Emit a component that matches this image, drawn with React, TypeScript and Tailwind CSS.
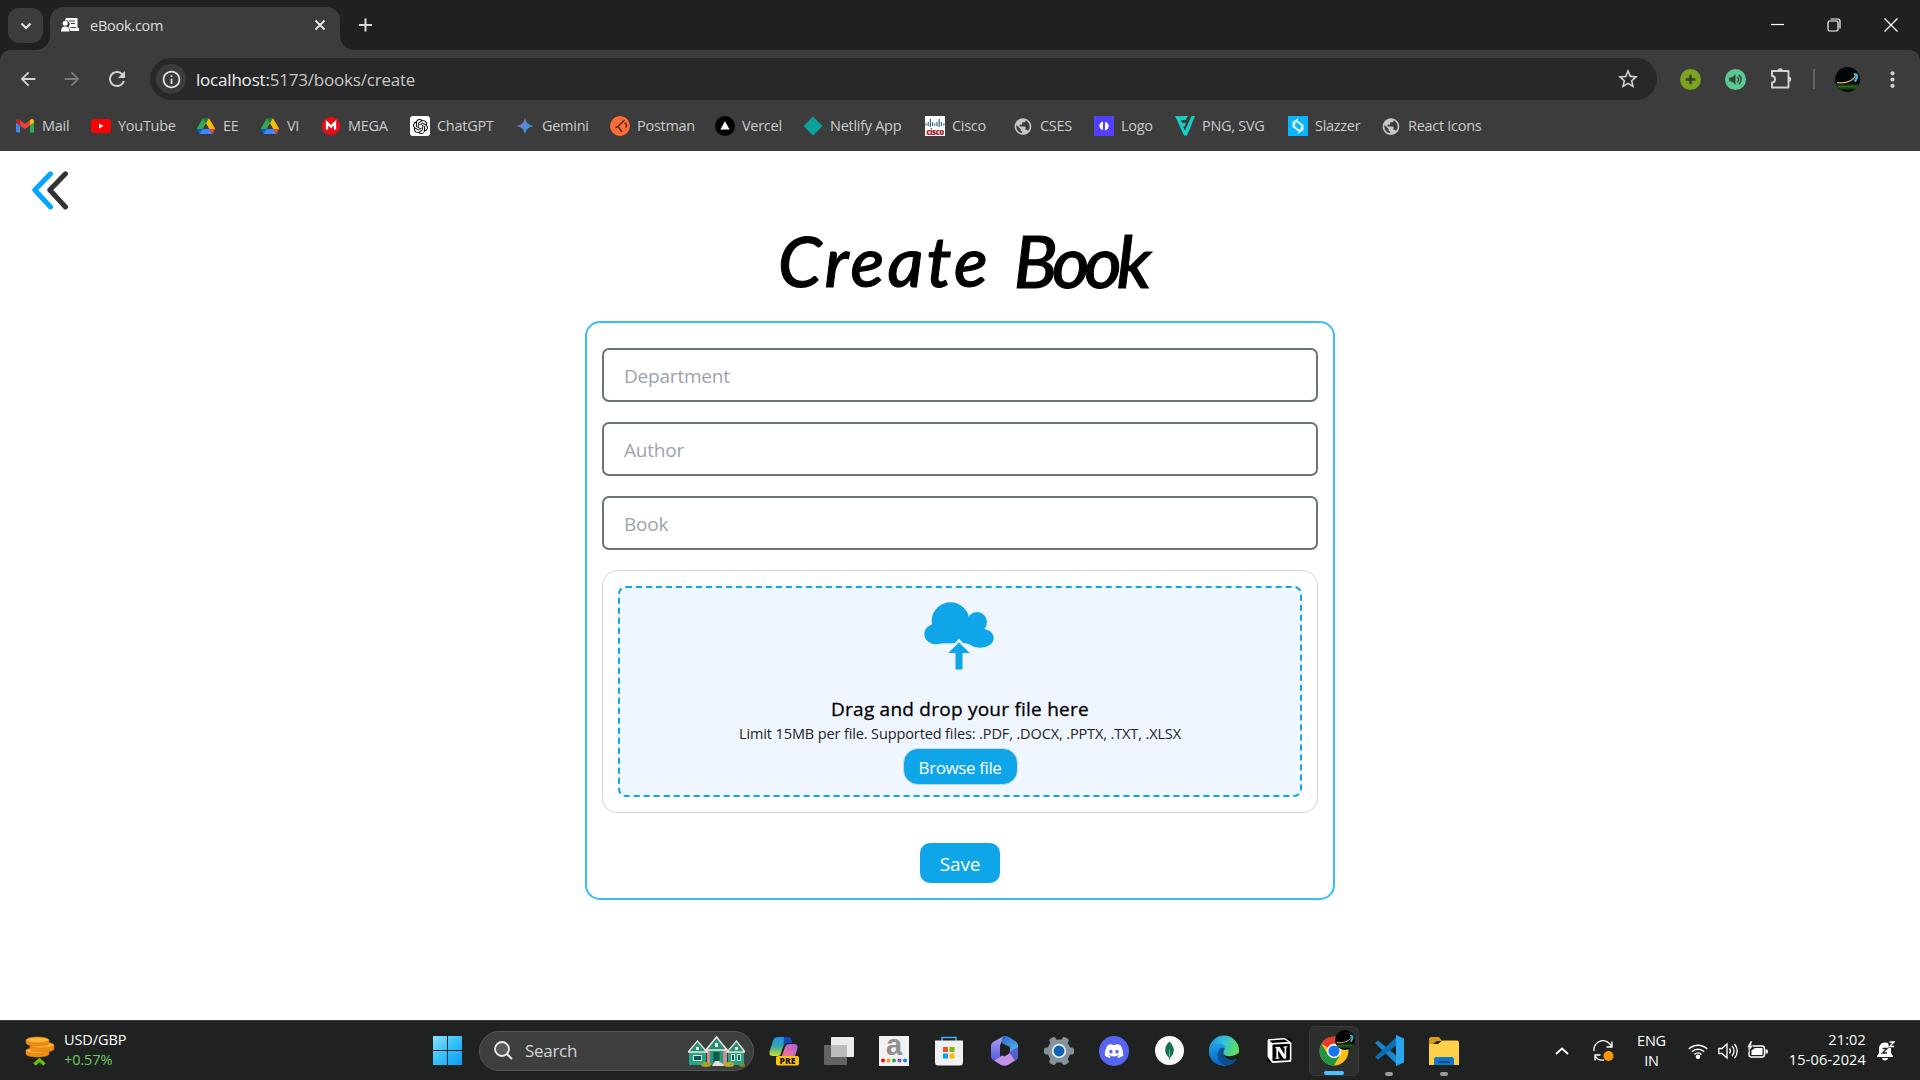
import type { ReactNode } from "react";
import { SiOpenai, SiMongodb, SiNotion } from "react-icons/si";
import { FaDiscord } from "react-icons/fa";
import { MdArrowBack, MdArrowForward, MdRefresh, MdInfoOutline, MdStarOutline, MdPublic, MdMoreVert } from "react-icons/md";

const Gmail = () => (
  <svg viewBox="52 42 88 66" className="w-[18px]">
    <path fill="#4285f4" d="M58 108h14V74L52 59v43c0 3.32 2.69 6 6 6" />
    <path fill="#34a853" d="M120 108h14c3.32 0 6-2.69 6-6V59l-20 15" />
    <path fill="#fbbc04" d="M120 48v26l20-15v-8c0-7.42-8.47-11.65-14.4-7.2" />
    <path fill="#ea4335" d="M72 74V48l24 18 24-18v26L96 92" />
    <path fill="#c5221f" d="M52 51v8l20 15V48l-5.6-4.2c-5.94-4.45-14.4-.22-14.4 7.2" />
  </svg>
);

const YouTube = () => (
  <svg viewBox="0 0 20 14" className="w-5">
    <rect width="20" height="14" rx="3.5" fill="#f00" />
    <path d="M8 4.4v5.2L12.6 7z" fill="#fff" />
  </svg>
);

const Drive = () => (
  <svg viewBox="0 0 87.3 78" className="w-[18px]">
    <path fill="#0066da" d="m6.6 66.85 3.85 6.65c.8 1.4 1.95 2.5 3.3 3.3l13.75-23.8H0c0 1.55.4 3.1 1.2 4.5z" />
    <path fill="#34a853" d="M43.65 25 29.9 1.2c-1.35.8-2.5 1.9-3.3 3.3L1.2 48.5C.4 49.9 0 51.45 0 53h27.5z" />
    <path fill="#ea4335" d="M73.55 76.8c1.35-.8 2.5-1.9 3.3-3.3l1.6-2.75 7.65-13.25c.8-1.4 1.2-2.95 1.2-4.5H59.8l5.85 11.5z" />
    <path fill="#188038" d="M43.65 25 57.4 1.2C56.05.4 54.5 0 52.9 0H34.4c-1.6 0-3.15.45-4.5 1.2z" />
    <path fill="#4285f4" d="M59.8 53H27.5L13.75 76.8c1.35.8 2.9 1.2 4.5 1.2h50.8c1.6 0 3.15-.45 4.5-1.2z" />
    <path fill="#fbbc04" d="m73.4 26.5-12.7-22c-.8-1.4-1.95-2.5-3.3-3.3L43.65 25 59.8 53h27.45c0-1.55-.4-3.1-1.2-4.5z" />
  </svg>
);

const Mega = () => (
  <svg viewBox="0 0 20 20" className="w-5">
    <circle cx="10" cy="10" r="9.3" fill="#e30d17" />
    <path d="M6 13.5V6.8L10 10.6l4-3.8v6.7" fill="none" stroke="#fff" strokeWidth="2.3" />
  </svg>
);

const ChatGpt = () => (
  <div className="flex size-5 items-center justify-center rounded-[3px] bg-white text-black">
    <SiOpenai className="size-[15px]" />
  </div>
);

const Gemini = () => (
  <svg viewBox="0 0 20 20" className="w-5">
    <defs>
      <linearGradient id="gem" x1="0" y1="0" x2="1" y2="1">
        <stop offset=".15" stopColor="#d8667c" />
        <stop offset=".4" stopColor="#6b7fd7" />
        <stop offset=".6" stopColor="#3c93dc" />
        <stop offset="1" stopColor="#5bb8d6" />
      </linearGradient>
    </defs>
    <path fill="url(#gem)" d="M10 1.5c.8 5 3.4 7.7 8.5 8.5-5.1.8-7.7 3.5-8.500 8.500-.8-5-3.400-7.700-8.500-8.500 5.100-.8 7.700-3.500 8.500-8.500z" />
  </svg>
);

const Postman = () => (
  <svg viewBox="0 0 20 20" className="w-5">
    <circle cx="10" cy="10" r="10" fill="#ff6c37" />
    <path d="M14.500 4 8 10.500l4 5.500M8 10.500l-2.500 1M14.500 7a2.500 2.500 0 0 1 1 4.500" fill="none" stroke="#4a3028" strokeWidth="1.500" />
  </svg>
);

const Vercel = () => (
  <svg viewBox="0 0 20 20" className="w-5">
    <circle cx="10" cy="10" r="10" fill="#000" />
    <path d="M10 5.300 14.600 13.500H5.400z" fill="#fff" />
  </svg>
);

const Netlify = () => (
  <svg viewBox="0 0 20 20" className="w-5">
    <path d="M10 .5 19.500 10 10 19.500.5 10z" fill="#0aa39b" />
  </svg>
);

const Cisco = () => (
  <div className="flex h-5 w-5 flex-col items-center justify-end overflow-hidden bg-white">
    <svg viewBox="0 0 20 9" className="w-5">
      <path d="M1 5.500v2M3.200 4v4M5.400 1v8M7.600 4v4M9.800 5.500v2M12 4v4M14.200 1v8M16.400 4v4M18.800 5.500v2" stroke="#2d6a84" strokeWidth="1.200" />
    </svg>
    <span className="text-[8px] leading-[9px] font-extrabold tracking-[-0.6px] text-[#a8202a]">cisco</span>
  </div>
);

const Globe = () => <MdPublic className="size-[21px] text-[#c4c7cb]" />;

const Logo = () => (
  <svg viewBox="0 0 20 20" className="w-5">
    <rect width="20" height="20" fill="#5340ff" />
    <path d="M8.500 6C5 7 5 13 8.500 13.500V10zM11.500 14c3.500-1 3.500-7 0-7.500V10z" fill="#fff" stroke="#fff" strokeWidth="1" strokeLinejoin="round" />
  </svg>
);

const PngSvg = () => (
  <svg viewBox="0 0 20 20" className="w-5">
    <path d="M0 0h13l-2.500 4H6l1 3h4l-1.500 3.500H8l2 4L16.500 0H20l-8 19.500H9z" fill="#14cfc4" />
  </svg>
);

const Slazzer = () => (
  <svg viewBox="0 0 20 20" className="w-5">
    <rect width="20" height="20" fill="#0ab4ff" />
    <path d="M10.500 2 4.500 6v5l6 4.500 1.500-1.200L6.500 10z" fill="#e8f8ff" />
    <path d="M9.500 18l6-4V9l-6-4.500L8 5.700 13.500 10z" fill="#e8f8ff" />
    <path d="m7 9 6 4.500M7 6.500l6 4.500" stroke="#0ab4ff" strokeWidth=".9" />
  </svg>
);

const bookmarks: { label: string; icon: ReactNode; box: string }[] = [
  { label: "Mail", icon: <Gmail />, box: "w-[76px]" },
  { label: "YouTube", icon: <YouTube />, box: "w-[105px]" },
  { label: "EE", icon: <Drive />, box: "w-[64px]" },
  { label: "VI", icon: <Drive />, box: "w-[61px]" },
  { label: "MEGA", icon: <Mega />, box: "w-[89px]" },
  { label: "ChatGPT", icon: <ChatGpt />, box: "w-[105px]" },
  { label: "Gemini", icon: <Gemini />, box: "w-[95px]" },
  { label: "Postman", icon: <Postman />, box: "w-[105px]" },
  { label: "Vercel", icon: <Vercel />, box: "w-[88px]" },
  { label: "Netlify App", icon: <Netlify />, box: "w-[122px]" },
  { label: "Cisco", icon: <Cisco />, box: "w-[88px]" },
  { label: "CSES", icon: <Globe />, box: "w-[81px]" },
  { label: "Logo", icon: <Logo />, box: "w-[81px]" },
  { label: "PNG, SVG", icon: <PngSvg />, box: "w-[113px]" },
  { label: "Slazzer", icon: <Slazzer />, box: "w-[93px]" },
  { label: "React Icons", icon: <Globe />, box: "w-[110px]" },
];

const Avatar = ({ className }: { className: string }) => (
  <svg viewBox="0 0 24 24" className={className}>
    <defs>
      <clipPath id="avatar">
        <circle cx="12" cy="12" r="12" />
      </clipPath>
    </defs>
    <g clipPath="url(#avatar)">
      <rect width="24" height="24" fill="#030608" />
      <path d="M0 16.500h24v5H0z" fill="#17400f" />
      <path d="M3 19h18" stroke="#3c7a2a" strokeWidth="1" />
      <path d="M2 15c8 1 15-1 18-7" fill="none" stroke="#d9b27a" strokeWidth="1.200" />
      <path d="M18 7c4-1 4 3 1 7" fill="none" stroke="#35b9e0" strokeWidth="2.200" />
    </g>
  </svg>
);

const TabStrip = () => (
  <div className="flex h-[50px] bg-[#1f2120]">
    <div className="ml-2 mt-2 flex size-[35px] items-center justify-center rounded-[11px] bg-[#3c3c3c]">
      <svg viewBox="0 0 12 8" className="w-3">
        <path d="m1.500 1.500 4.500 4.500 4.500-4.500" fill="none" stroke="#e3e3e3" strokeWidth="2.200" />
      </svg>
    </div>
    <svg viewBox="0 0 15 15" className="-ml-[8px] mt-[35px] size-[15px]">
      <path d="M15 0v15H0C8 15 15 9 15 0z" fill="#3c3c3c" />
    </svg>
    <div className="mt-[7px] flex h-[43px] w-[290px] items-center rounded-t-[13px] bg-[#3c3c3c] pb-[7px]">
      <svg viewBox="0 0 18 14" className="ml-[11px] w-[18px]">
        <path d="M5 0h11.500v10H18v3H9.500L7.500 9 9 6 6.500 2.500H4z" fill="#fff" />
        <circle cx="4.200" cy="5.300" r="2.500" fill="#fff" />
        <path d="M0 13.500C.2 9.500 2 8.500 4.200 8.500s4 1 4.300 5z" fill="#fff" />
        <path d="M8 3h6M10 5.500h4M9.500 9.500H15" stroke="#3c3c3c" strokeWidth="1" />
      </svg>
      <span className="ml-[11px] flex-1 pt-px text-[14.500px] tracking-[-0.25px] text-[#dfdfdf]">eBook.com</span>
      <svg viewBox="0 0 12 12" className="mr-[14px] w-3">
        <path d="m1.500 1.500 9 9m0-9-9 9" stroke="#e3e3e3" strokeWidth="2" />
      </svg>
    </div>
    <svg viewBox="0 0 15 15" className="mt-[35px] size-[15px]">
      <path d="M0 0v15h15C7 15 0 9 0 0z" fill="#3c3c3c" />
    </svg>
    <svg viewBox="0 0 14 14" className="ml-[3px] mt-[18px] size-[14px]">
      <path d="M7.500 .5v13M1 7h13" stroke="#dadada" strokeWidth="2" />
    </svg>
    <div className="ml-auto mr-[22px] flex h-[49px] items-center">
      <svg viewBox="0 0 13 13" className="w-[13px]">
        <path d="M0 6.500h13" stroke="#fff" strokeWidth="1.200" />
      </svg>
      <svg viewBox="0 0 14 14" className="ml-[43px] w-[14px]">
        <rect x="1" y="3" width="10" height="10" rx="1.500" fill="none" stroke="#fff" strokeWidth="1.200" />
        <path d="M3.500 1H11a2 2 0 0 1 2 2v7.500" fill="none" stroke="#fff" strokeWidth="1.200" />
      </svg>
      <svg viewBox="0 0 14 14" className="ml-[43px] w-[14px]">
        <path d="m.5.5 13 13m0-13-13 13" stroke="#fff" strokeWidth="1.300" />
      </svg>
    </div>
  </div>
);

const Toolbar = () => (
  <div className="h-[101px] rounded-t-[10px] bg-[#3c3c3c]">
    <div className="flex h-[58px] items-center">
      <MdArrowBack className="ml-[17px] size-[22px] text-[#d2d2d2]" />
      <MdArrowForward className="ml-[22px] size-[22px] text-[#7c7c7c]" />
      <MdRefresh className="ml-[22px] size-[24px] text-[#d2d2d2]" />
      <div className="ml-[21px] flex h-[42px] w-[1507px] items-center rounded-full bg-[#282828]">
        <div className="ml-[6px] flex size-[30px] items-center justify-center rounded-full bg-[#3c3c3c]">
          <MdInfoOutline className="size-[21px] text-[#e3e3e3]" />
        </div>
        <span className="ml-[10px] flex-1 pt-px text-[17px] tracking-[-0.2px] text-[#c7c7c7]">
          <span className="text-[#f0f0f0]">localhost:</span>5173/books/create
        </span>
        <MdStarOutline className="mr-[17px] size-[24px] text-[#d2d2d2]" />
      </div>
      <svg viewBox="0 0 22 22" className="ml-[23px] w-[21px]">
        <circle cx="11" cy="11" r="11" fill="#7ba31f" />
        <path d="M11 6v10M6 11h10" stroke="#333b22" strokeWidth="2.500" />
      </svg>
      <svg viewBox="0 0 22 22" className="ml-[24px] w-[21px]">
        <circle cx="11" cy="11" r="11" fill="#5cc891" />
        <path d="M4.500 9H7l4-3.500v11L7 13H4.500z" fill="#34443c" />
        <path d="M12.800 8.200a3.500 3.500 0 0 1 0 5.600M14.500 6a6.500 6.500 0 0 1 0 10" fill="none" stroke="#34443c" strokeWidth="1.500" />
      </svg>
      <svg viewBox="0 0 22 22" className="ml-[24px] mb-[2px] w-[22px]" fill="none" stroke="#d2d2d2" strokeWidth="1.900" strokeLinejoin="round">
        <path d="M2 4h16.500v16.500H2v-5c4 0 4-6.500 0-6.500z" />
        <path d="M7.500 4a2.700 2.700 0 0 1 5.400 0zM18.500 9.500a2.700 2.700 0 0 1 0 5.400z" fill="#d2d2d2" stroke="none" />
      </svg>
      <div className="ml-[21px] h-5 w-[2px] bg-[#626262]" />
      <Avatar className="ml-[20px] size-[25px]" />
      <MdMoreVert className="ml-[20px] size-[25px] text-[#d2d2d2]" />
    </div>
    <div className="flex h-[36px] items-center pl-[15px]">
      {bookmarks.map((b) => (
        <div key={b.label} className={`flex shrink-0 items-center ${b.box}`}>
          <div className="flex w-5 shrink-0 justify-center">{b.icon}</div>
          <span className="ml-[7px] whitespace-nowrap text-[14.500px] tracking-[-0.28px] text-[#c9cbce]">{b.label}</span>
        </div>
      ))}
    </div>
  </div>
);

const Field = ({ label }: { label: string }) => (
  <input
    placeholder={label}
    className="h-[54px] w-full rounded-[7px] border-2 border-[#6b7280] bg-white pl-[20px] pt-[1px] text-[19px] tracking-[-0.2px] placeholder:text-[#9ca3af]"
  />
);

const CreateBook = () => (
  <main className="flex h-[869px] flex-col bg-white">
    <div className="h-[60px] pl-[32px] pt-[20px]">
      <svg viewBox="0 0 36 39" className="w-[36px]" fill="none" strokeWidth="5" strokeLinecap="round" strokeLinejoin="round">
        <path d="M18.500 2.800 2.800 19l15.700 17" stroke="#00a6ff" />
        <path d="M33.500 2.800 17.800 19l15.700 17" stroke="#333336" />
      </svg>
    </div>
    <h1 className="flex h-[110px] items-center gap-[23px] pb-[12px] pl-[778px] font-['Lato',cursive] text-[70px] leading-none font-medium text-black italic [-webkit-text-stroke:1px_black]">
      <span className="tracking-[3.200px]">Create</span>
      <span className="text-[72px] tracking-[-5px]">Book</span>
    </h1>
    <form className="mx-auto flex h-[579px] w-[750px] flex-col gap-5 rounded-[15px] border-2 border-[#38bdf8] px-[15px] pt-[25px]">
      <Field label="Department" />
      <Field label="Author" />
      <Field label="Book" />
      <div className="h-[243px] rounded-[15px] border border-[#d1d5db] p-[15px]">
        <div className="flex h-[211px] flex-col items-center rounded-[8px] border-2 border-dashed border-[#0ea5e9] bg-[#eff6ff] pt-[14px]">
          <svg viewBox="0 0 70 68" className="mr-[2px] h-[68px] w-[70px]">
            <g fill="#0ea5e9">
              <circle cx="26.500" cy="19" r="18.800" />
              <circle cx="53" cy="20" r="10" />
              <ellipse cx="12" cy="32" rx="11.700" ry="10.300" />
              <ellipse cx="56" cy="36" rx="13.700" ry="9.800" />
              <path d="M12 22h45v18l-9 2.500-7-1.300H29L17 41.500z" />
            </g>
            <path d="m35 36.500-8 9h16z" fill="#eff6ff" />
            <path d="M35 40.500 45.800 51H38.500v16.500h-7V51h-7.300z" fill="#0ea5e9" />
          </svg>
          <div className="mt-[25px] text-[19px] leading-[28px] font-medium tracking-[0.24px] text-black [-webkit-text-stroke:0.300px_black]">
            Drag and drop your file here
          </div>
          <div className="text-[14.500px] leading-[22px] tracking-[-0.12px] text-[#222]">
            Limit 15MB per file. Supported files: .PDF, .DOCX, .PPTX, .TXT, .XLSX
          </div>
          <button type="button" className="mt-[3px] h-[37px] w-[115px] rounded-[15px] border border-[#cbd5dc] bg-[#0ea5e9] pt-[2px] text-[17px] tracking-[-0.4px] text-white">
            Browse file
          </button>
        </div>
      </div>
      <button type="button" className="mx-auto mt-[10px] h-[40px] w-[80px] rounded-[10px] bg-[#0ea5e9] pt-[2px] text-[19px] tracking-[-0.2px] text-white">
        Save
      </button>
    </form>
  </main>
);

const Cell = ({ children }: { children: ReactNode }) => (
  <div className="relative flex h-[50px] w-[50px] shrink-0 items-center justify-center">{children}</div>
);

const Houses = () => (
  <svg viewBox="0 0 57 32" className="w-[57px]">
    <path d="M1 16h17v14H1zM40 16h16v14H40z" fill="#2aa384" />
    <path d="M19 13h20v17H19z" fill="#c98f97" />
    <path d="M22 9h13v21H22z" fill="#27997c" />
    <path d="m0 17 9.500-11L19 17zM39 17l9.500-11L57 17z" fill="#248f75" stroke="#eee5e0" strokeWidth="1.400" />
    <path d="m18 15 10.500-13L39 15z" fill="#248f75" stroke="#eee5e0" strokeWidth="1.600" />
    <path d="M5 20h9v6H5zM43 19h4v7h-4zM49 19h4v7h-4z" fill="#d6eee4" />
    <path d="M6 21h7v4H6zM44 20h2v5h-2zM50 20h2v5h-2zM25.500 17h6v13h-6z" fill="#0f5a4c" />
    <path d="M27 8h3v4h-3zM8 12h3v3H8zM47 12h3v3h-3z" fill="#dff3ea" />
    <path d="m24 31 3-5h4l6 5z" fill="#e7ddd5" />
    <ellipse cx="18" cy="29.500" rx="5" ry="2.500" fill="#a6a21e" />
    <ellipse cx="41" cy="29.500" rx="5" ry="2.500" fill="#b6ad25" />
    <ellipse cx="54" cy="30" rx="3" ry="1.800" fill="#77901f" />
  </svg>
);

const Taskbar = () => (
  <footer className="flex h-[60px] items-center border-t border-[#3d4140] bg-[#202221]">
    <div className="flex w-[422px] items-center pl-[25px]">
      <svg viewBox="0 0 30 30" className="w-[30px]">
        <g stroke="#d97a0b" strokeWidth=".6">
          <path d="M1 14v4c0 4 23 4 23 0v-4z" fill="#f08c16" />
          <ellipse cx="12.500" cy="14.500" rx="11.500" ry="3" fill="#ffb53c" />
          <path d="M5 9v4c0 4 24 4 24 0V9z" fill="#f08c16" />
          <ellipse cx="17" cy="9" rx="12" ry="3" fill="#ffb53c" />
          <path d="M1 4v3c0 4 23 4 23 0V4z" fill="#f08c16" />
          <ellipse cx="12.500" cy="4" rx="11.500" ry="3" fill="#ffb53c" />
        </g>
        <path d="m9.500 28.500 5-4.500 5 4.500" fill="none" stroke="#68bd12" strokeWidth="3.400" />
      </svg>
      <div className="ml-[9px] pb-[1px] text-[14.500px] leading-5 tracking-[-0.1px]">
        <div className="text-white">USD/GBP</div>
        <div className="text-[#6ccb5f]">+0.57%</div>
      </div>
    </div>
    <Cell>
      <svg viewBox="0 0 29 29" className="w-[29px]">
        <defs>
          <linearGradient id="win" x1="0" y1="0" x2="29" y2="29" gradientUnits="userSpaceOnUse">
            <stop stopColor="#8ce0fd" />
            <stop offset=".5" stopColor="#35c0f8" />
            <stop offset="1" stopColor="#0a9cf5" />
          </linearGradient>
        </defs>
        <path d="M0 0h14v14H0zM15 0h14v14H15zM0 15h14v14H0zM15 15h14v14H15z" fill="url(#win)" />
      </svg>
    </Cell>
    <div className="ml-[7px] mr-[5px] flex h-[40px] w-[275px] items-center rounded-full border border-[#555756] bg-[#3d3f3e] pl-[14px] pr-[8px]">
      <svg viewBox="0 0 19 19" className="w-[19px]">
        <circle cx="8" cy="8" r="7" fill="#5a5c5b" stroke="#ececec" strokeWidth="1.800" />
        <path d="m13 13 5 5" stroke="#ececec" strokeWidth="2" />
      </svg>
      <span className="ml-[12px] flex-1 pt-px text-[17px] tracking-[-0.3px] text-[#d4d5d4]">Search</span>
      <Houses />
    </div>
    <div className="flex gap-[5px]">
      <Cell>
        <svg viewBox="0 0 30 30" className="w-[30px]">
          <defs>
            <linearGradient id="copA" x1="0" y1="0" x2="0" y2="1">
              <stop stopColor="#1d8ff0" />
              <stop offset=".5" stopColor="#36a9a4" />
              <stop offset="1" stopColor="#d5dc35" />
            </linearGradient>
            <linearGradient id="copB" x1="1" y1="0" x2="0" y2="1">
              <stop stopColor="#a55bf0" />
              <stop offset="1" stopColor="#fb7a78" />
            </linearGradient>
          </defs>
          <path d="M9 1h9c3 0 4 2 5 6h-5c-2 0-3 1-4 4l-2 6c-1 3-2 3-4 3H4c-4 0-4-3-3-6l3-9c1-3 2-4 5-4z" fill="url(#copA)" />
          <path d="M15 1h4c3 0 3 2 4 6h-5c-2 0-3 1-3.500 2.500z" fill="#1648b5" />
          <path d="M20 8h5c4 0 4 3 3 6l-2 6H13l3-9c1-2 2-3 4-3z" fill="url(#copB)" />
          <rect x="7" y="20" width="23" height="9.500" rx="2" fill="#ffc20a" />
          <text x="18.500" y="27.600" textAnchor="middle" fontSize="8.500" fontWeight="800" fill="#1a1a1a" fontFamily="Open Sans">PRE</text>
        </svg>
      </Cell>
      <Cell>
        <svg viewBox="0 0 30 28" className="w-[30px]">
          <rect x="7" y="0" width="23" height="20" rx="1" fill="#ececec" />
          <rect x="0" y="8" width="23" height="20" rx="1" fill="#6e6e6e" opacity=".85" />
          <path d="M7 8h16v12H7z" fill="#bcbcbc" />
        </svg>
      </Cell>
      <Cell>
        <svg viewBox="0 0 30 30" className="w-[30px] overflow-visible">
          <rect width="30" height="30" fill="#f1f1f1" />
          <text x="15" y="19" textAnchor="middle" fontSize="29" fontWeight="700" fill="#8f8f8f" fontFamily="Liberation Sans">a</text>
          <circle cx="4" cy="24.500" r="2" fill="#ee1122" />
          <circle cx="9.500" cy="24.500" r="2" fill="#f39a1c" />
          <circle cx="15" cy="24.500" r="2" fill="#1fa85a" />
          <circle cx="20.500" cy="24.500" r="2" fill="#8a45d0" />
          <circle cx="26" cy="24.500" r="2" fill="#1487e0" />
        </svg>
      </Cell>
      <Cell>
        <svg viewBox="0 0 30 30" className="w-[30px]">
          <path d="M8 6V1.500h14V6" fill="none" stroke="#35b5ee" strokeWidth="1.600" />
          <path d="M1 4.500h28V26c0 2.500-1 3.500-3 3.500H4c-2 0-3-1-3-3.500z" fill="#f1f1f1" />
          <path d="M9 11h5v5H9z" fill="#f25022" />
          <path d="M15.500 11h5v5h-5z" fill="#7fba00" />
          <path d="M9 17.500h5v5H9z" fill="#00a4ef" />
          <path d="M15.500 17.500h5v5h-5z" fill="#ffb900" />
        </svg>
      </Cell>
      <Cell>
        <svg viewBox="0 0 27 30" className="w-[27px]">
          <defs>
            <linearGradient id="mA" x1="0" y1="0" x2="0" y2="1">
              <stop stopColor="#b9a1f5" />
              <stop offset="1" stopColor="#4a5be0" />
            </linearGradient>
            <linearGradient id="mB" x1="0" y1="0" x2="1" y2="1">
              <stop stopColor="#2b62c9" />
              <stop offset="1" stopColor="#58c8f5" />
            </linearGradient>
          </defs>
          <path d="M13 0 3 5.500C1 6.500 0 8 0 10v10c0 2 1 3.500 3 4.500l6-3.500V11c0-3 2-5 4-11z" fill="url(#mA)" />
          <path d="M13 0c3 0 4 .5 5 1l6 4c2 1 3 3 3 5v10l-8-4v-5l-8-4c-1-3 0-6 2-7z" fill="url(#mB)" />
          <path d="m3 24.500 13-8 11 3c0 2-1 4-3 5l-7 4.500c-2 1-5 1-7 0z" fill="#c293e6" />
          <path d="m18 16 9-5v9c0 2-1 3.500-3 4.500z" fill="#5460cf" />
          <path d="m13.500 10 4.500 2.600v5.200l-4.500 2.600L9 17.800v-5.200z" fill="#202221" />
        </svg>
      </Cell>
      <Cell>
        <svg viewBox="0 0 30 30" className="w-[30px]">
          <g fill="#85919b">
            <circle cx="15" cy="15" r="11.500" />
            <rect x="11.500" y="0" width="7" height="30" rx="2" transform="rotate(30 15 15)" />
            <rect x="11.500" y="0" width="7" height="30" rx="2" transform="rotate(90 15 15)" />
            <rect x="11.500" y="0" width="7" height="30" rx="2" transform="rotate(150 15 15)" />
          </g>
          <circle cx="15" cy="15" r="7.200" fill="#e9edf0" />
          <circle cx="15" cy="15" r="5.400" fill="#0f62b4" />
        </svg>
      </Cell>
      <Cell>
        <div className="flex size-[30px] items-center justify-center rounded-full bg-[#5865f2] text-white">
          <FaDiscord className="size-[20px]" />
        </div>
      </Cell>
      <Cell>
        <div className="flex size-[29px] items-center justify-center rounded-full bg-[#fafafa]">
          <SiMongodb className="size-[19px] text-[#12724c]" />
        </div>
      </Cell>
      <Cell>
        <svg viewBox="0 0 30 31" className="w-[30px]">
          <defs>
            <linearGradient id="eA" x1="0" y1="0" x2="1" y2=".4">
              <stop stopColor="#1a8fe0" />
              <stop offset=".5" stopColor="#33bfd8" />
              <stop offset="1" stopColor="#62df55" />
            </linearGradient>
            <linearGradient id="eB" x1="0" y1="0" x2="0" y2="1">
              <stop stopColor="#1ea1e8" />
              <stop offset="1" stopColor="#0862c0" />
            </linearGradient>
          </defs>
          <circle cx="15" cy="15.500" r="15" fill="url(#eA)" />
          <path d="M0 13C3 7 13 7 17 12c-4 0-5 4-3 8 2 4 7 8 13 5-5 6-13 7-19 4S-1 20 0 13z" fill="url(#eB)" />
          <path d="M12 13c-6 4-4 15 5 17.500 5 0 9-3 10.500-6.500-6 3-13 0-13-6 0-3 1-4 2-4.500-1-1-3-1-4.500-.5z" fill="#0c4f92" />
          <path d="M14.500 16c-.5 2 .5 3.500 2 4.500 3 1.500 9 .5 12-2l1.500 0v3l-2.500 2.500c-6 3-13 0-13-6z" fill="#202221" />
        </svg>
      </Cell>
      <Cell>
        <SiNotion className="size-[25px] rounded bg-black text-white" />
      </Cell>
      <div className="relative flex size-[50px] flex-col items-center rounded-[6px] border border-[#383838] bg-[#2d2e2e] pt-[9px]">
        <svg viewBox="0 0 48 48" className="w-[30px]">
          <circle cx="24" cy="24" r="23" fill="#fbc116" />
          <path d="M24 24 4 12.500A23 23 0 0 1 44 12.500H24z" fill="#e33b2e" />
          <path d="M4 12.500A23 23 0 0 0 24 47l10-17.500L24 24l-10 5.700z" fill="#229342" />
          <circle cx="24" cy="24" r="11.500" fill="#fff" />
          <circle cx="24" cy="24" r="9" fill="#1a73e8" />
        </svg>
        <Avatar className="absolute left-[25px] top-[3px] size-[20px]" />
        <div className="absolute bottom-0 h-1 w-5 rounded-full bg-[#4cc2ff]" />
      </div>
      <Cell>
        <svg viewBox="0 0 30 31" className="w-[30px]">
          <path d="m1 8 3-2.500L24 22v8.500z" fill="#1c86cd" />
          <path d="m1 22 3 2.500L24 9V.5z" fill="#0b6fb5" />
          <path d="m22 0 8 3.500v24L22 31z" fill="#2aa6f0" />
        </svg>
        <div className="absolute bottom-0 h-1 w-2 rounded-full bg-[#9b9b9b]" />
      </Cell>
      <Cell>
        <svg viewBox="0 0 30 28" className="w-[30px]">
          <path d="M0 2c0-1 1-2 2-2h8l3 4h-5L0 10z" fill="#d99a10" />
          <path d="M0 7h9l4-3.500h15c1 0 2 1 2 2V28H0z" fill="#ffcf48" />
          <path d="M5 28v-6c0-1 1-2 2-2h16c1 0 2 1 2 2v6z" fill="#1478c8" />
          <path d="M9 24h12v2H9z" fill="#0b4f94" />
        </svg>
        <div className="absolute bottom-0 h-1 w-2 rounded-full bg-[#9b9b9b]" />
      </Cell>
    </div>
    <div className="ml-auto flex items-center text-[14.500px] leading-5 text-white">
      <svg viewBox="0 0 14 8" className="w-[14px]">
        <path d="m1 7 6-5.500L13 7" fill="none" stroke="#fff" strokeWidth="1.800" />
      </svg>
      <svg viewBox="0 0 21 22" className="ml-[24px] w-[21px]" fill="none" stroke="#fff" strokeWidth="1.300">
        <path d="M1 11A9 9 0 0 1 18.500 7M19 1.500V7h-5.500M2 20.500V15h5.500M2 15.500c1.500 3.500 5 5 9 4.500" />
        <circle cx="15.500" cy="16" r="5" fill="#ff9800" stroke="none" />
      </svg>
      <div className="ml-[22px] w-[31px] text-center tracking-[-0.2px]">
        <div>ENG</div>
        <div>IN</div>
      </div>
      <svg viewBox="0 0 20 16" className="ml-[21px] w-[20px]" fill="none" stroke="#fff" strokeWidth="1.500">
        <path d="M.8 6a13 13 0 0 1 18.400 0M3.800 8.800a9 9 0 0 1 12.400 0M6.500 11.500a5 5 0 0 1 7 0" />
        <circle cx="10" cy="13.700" r="1.500" fill="#fff" />
      </svg>
      <svg viewBox="0 0 20 18" className="ml-[10px] w-[20px]" fill="none" stroke="#fff" strokeWidth="1.300">
        <path d="M.8 6.500H4L9 2v14l-5-4.500H.8zM11.500 6.500a4 4 0 0 1 0 5M14 4a7 7 0 0 1 0 10M16.500 2a10.500 10.500 0 0 1 0 14" />
      </svg>
      <svg viewBox="0 0 21 18" className="ml-[9px] mb-[2px] w-[21px]">
        <rect x="2" y="5" width="15.500" height="11" rx="2.500" fill="none" stroke="#fff" strokeWidth="1.400" />
        <path d="M4.500 9.500 8 7h7.500v7h-11zM18.500 8.500H20a.8.8 0 0 1 .8.8v2.400a.8.8 0 0 1-.8.8h-1.500z" fill="#fff" />
        <path d="M3.500 0 0 6.500h2.200L1 11l5-6H3.800L5.500 0z" fill="#fff" stroke="#202221" strokeWidth=".5" />
      </svg>
      <div className="ml-[16px] w-[82px] pb-[1px] text-right tracking-[0.150px]">
        <div>21:02</div>
        <div>15-06-2024</div>
      </div>
      <svg viewBox="0 0 18 20" className="ml-[11px] mr-[25px] w-[18px]">
        <path d="M8 1.500c-4 0-6 3-6 6V12L0 15v1h16v-1l-2-3V7.500c0-3-2-6-6-6zM5 17h6c0 1.500-1.300 2.500-3 2.500S5 18.500 5 17z" fill="#fff" />
        <path d="M5.500 7.500h4.500l-4.500 4.500h4.500" fill="none" stroke="#202221" strokeWidth="1.400" />
        <rect x="11.500" y="0" width="6.500" height="7" fill="#202221" />
        <path d="M12.500 1h4.500l-4.500 4.500h4.500" fill="none" stroke="#fff" strokeWidth="1.300" />
      </svg>
    </div>
  </footer>
);

export default function App() {
  return (
    <div className="h-[1080px] w-[1920px] overflow-hidden bg-[#1f2120] font-['Open_Sans','Noto_Sans',sans-serif]">
      <TabStrip />
      <Toolbar />
      <CreateBook />
      <Taskbar />
    </div>
  );
}
